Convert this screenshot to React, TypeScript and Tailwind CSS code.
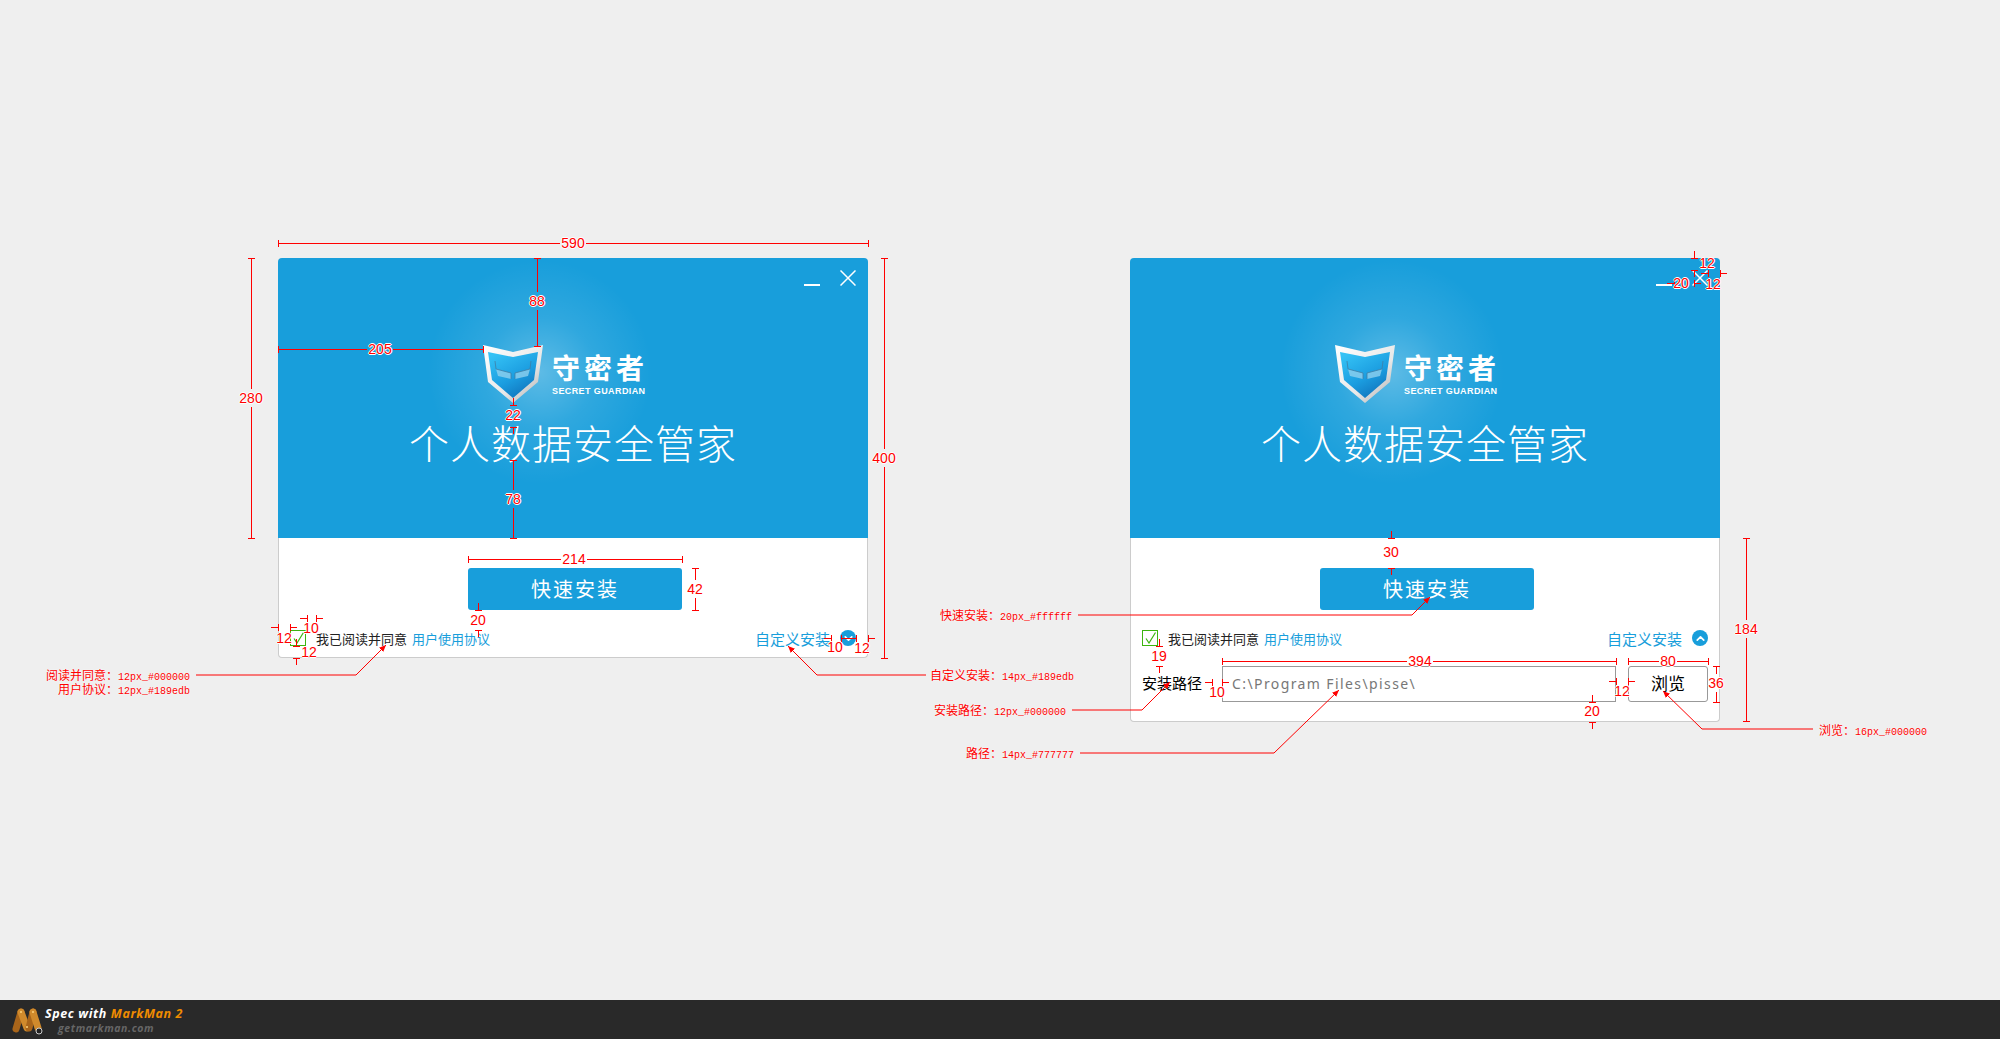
import { ChevronDown, ChevronUp } from "lucide-react";

const cjk = "font-['Liberation_Sans','Noto_Sans_CJK_SC',sans-serif]";

// dimension lines: x1, y1, x2, y2. Short ones get outward stubs instead of a line.
const dims = [
  [278, 243, 868, 243],
  [251, 258, 251, 538],
  [884, 258, 884, 658],
  [537, 258, 537, 346],
  [278, 349, 483, 349],
  [513, 405, 513, 427],
  [513, 460, 513, 538],
  [468, 559, 682, 559],
  [695, 568, 695, 610],
  [478, 610, 478, 630],
  [278, 627, 290, 627],
  [307, 618, 316, 618],
  [296, 646, 296, 658],
  [831, 638, 841, 638],
  [856, 638, 868, 638],
  [1391, 538, 1391, 568],
  [1159, 646, 1159, 666],
  [1222, 661, 1616, 661],
  [1628, 661, 1708, 661],
  [1716, 666, 1716, 702],
  [1746, 538, 1746, 721],
  [1212, 682, 1222, 682],
  [1616, 681, 1628, 681],
  [1592, 702, 1592, 722],
  [1694, 258, 1694, 270],
  [1674, 283, 1694, 283],
  [1708, 273, 1720, 273],
];

const dimLabels: [string, number, number][] = [
  ["590", 573, 243],
  ["280", 251, 398],
  ["400", 884, 458],
  ["88", 537, 301],
  ["205", 380, 349],
  ["22", 513, 415],
  ["78", 513, 499],
  ["214", 574, 559],
  ["42", 695, 589],
  ["20", 478, 620],
  ["12", 284, 638],
  ["10", 311, 628],
  ["12", 309, 652],
  ["10", 835, 647],
  ["12", 862, 648],
  ["30", 1391, 552],
  ["19", 1159, 656],
  ["394", 1420, 661],
  ["80", 1668, 661],
  ["36", 1716, 683],
  ["184", 1746, 629],
  ["10", 1217, 692],
  ["12", 1622, 691],
  ["20", 1592, 711],
  ["12", 1707, 263],
  ["20", 1681, 283],
  ["12", 1713, 284],
];

// leaders from a note to the thing it describes
const leaders = [
  "196,675 356,675 386,645",
  "926,675 817,675 788,646",
  "1078,615 1412,615 1430,597",
  "1072,710 1142,710 1170,682",
  "1080,753 1274,753 1339,690",
  "1813,729 1702,729 1663,691",
];

const notes: [string, string, number, number][] = [
  ["阅读并同意：", "12px_#000000", 190, 677],
  ["用户协议：", "12px_#189edb", 190, 691],
  ["自定义安装：", "14px_#189edb", 1074, 677],
  ["快速安装：", "20px_#ffffff", 1072, 617],
  ["安装路径：", "12px_#000000", 1066, 712],
  ["路径：", "14px_#777777", 1074, 755],
  ["浏览：", "16px_#000000", 1927, 732],
];

function segments(x1: number, y1: number, x2: number, y2: number) {
  const flat = y1 === y2;
  const label = dimLabels.find(([, lx, ly]) =>
    flat ? ly === y1 && lx > x1 && lx < x2 : lx === x1 && ly > y1 && ly < y2
  );
  if (!label) return [[x1, y1, x2, y2]];
  if (flat) {
    const half = label[0].length * 4 + 1;
    return [
      [x1, y1, label[1] - half, y1],
      [label[1] + half, y1, x2, y1],
    ];
  }
  return [
    [x1, y1, x1, label[2] - 9],
    [x1, label[2] + 9, x1, y2],
  ];
}

function Dim({ x1, y1, x2, y2 }: { x1: number; y1: number; x2: number; y2: number }) {
  const flat = y1 === y2;
  const short = flat ? x2 - x1 <= 30 : y2 - y1 <= 30;
  return (
    <g stroke="#ff0000" strokeWidth="1" shapeRendering="crispEdges">
      {flat ? (
        <>
          <line x1={x1} y1={y1 - 3} x2={x1} y2={y1 + 4} />
          <line x1={x2} y1={y1 - 3} x2={x2} y2={y1 + 4} />
        </>
      ) : (
        <>
          <line x1={x1 - 3} y1={y1} x2={x1 + 4} y2={y1} />
          <line x1={x1 - 3} y1={y2} x2={x1 + 4} y2={y2} />
        </>
      )}
      {short ? (
        flat ? (
          <>
            <line x1={x1 - 7} y1={y1} x2={x1} y2={y1} />
            <line x1={x2} y1={y1} x2={x2 + 7} y2={y1} />
          </>
        ) : (
          <>
            <line x1={x1} y1={y1 - 7} x2={x1} y2={y1} />
            <line x1={x1} y1={y2} x2={x1} y2={y2 + 7} />
          </>
        )
      ) : (
        segments(x1, y1, x2, y2).map(([a, b, c, d]) => <line key={`${a}-${b}`} x1={a} y1={b} x2={c} y2={d} />)
      )}
    </g>
  );
}

function Shield() {
  return (
    <svg width="60" height="59" viewBox="0 0 60 59">
      <defs>
        <linearGradient id="rim" x1="0" y1="0" x2="1" y2="1">
          <stop offset="0" stopColor="#ffffff" />
          <stop offset="0.6" stopColor="#e8e8e8" />
          <stop offset="1" stopColor="#a9a9a9" />
        </linearGradient>
        <linearGradient id="core" x1="0.2" y1="0" x2="0.8" y2="1">
          <stop offset="0" stopColor="#35c2f5" />
          <stop offset="0.55" stopColor="#1b9de0" />
          <stop offset="1" stopColor="#0f6fb8" />
        </linearGradient>
      </defs>
      <path d="M0 0 L30 7 L60 0 L55 37 L30 58 L5 37 Z" fill="url(#rim)" />
      <path d="M5 7 L30 12 L55 7 L51 35 L30 53 L9 35 Z" fill="url(#core)" />
      <path d="M13 24 L28 28 L28 34 L15 31 Z" fill="#8fd0ee" opacity="0.8" />
      <path d="M47 24 L32 28 L32 34 L45 31 Z" fill="#8fd0ee" opacity="0.8" />
      <path d="M12 16 L13 24 L28 28 L28 34 M48 16 L47 24 L32 28 L32 34" fill="none" stroke="#3f7fa6" strokeWidth="0.8" />
    </svg>
  );
}

function InstallWindow({ expanded, className }: { expanded?: boolean; className: string }) {
  return (
    <div className={`absolute w-[590px] ${cjk} ${className}`}>
      <div className="flex h-[280px] flex-col rounded-t-[4px] bg-[#189edb] bg-[radial-gradient(circle_at_262px_114px,rgba(255,255,255,0.3),rgba(255,255,255,0.1)_55px,rgba(255,255,255,0)_112px)]">
        <div className="flex h-[28px] items-end justify-end gap-5 pr-3">
          <span className="h-0.5 w-4 bg-white" />
          <svg width="16" height="16" viewBox="0 0 16 16">
            <path d="M0.5 0.5 L15.5 15.5 M15.5 0.5 L0.5 15.5" stroke="#ffffff" strokeWidth="1.5" />
          </svg>
        </div>
        <div className="ml-[205px] mt-[59px] flex items-start gap-[9px]">
          <Shield />
          <div className="flex flex-col items-start text-white">
            <div className="mt-[10px] h-[30px] text-[28px] font-bold leading-[30px] tracking-[4px]">守密者</div>
            <div className="mt-[1px] text-[9px] font-bold leading-[10px] tracking-[0.4px]">SECRET GUARDIAN</div>
          </div>
        </div>
        <div className="mt-[15px] text-center text-[40px] font-light leading-[52px] tracking-[1px] text-white">个人数据安全管家</div>
      </div>
      <div className="rounded-b-[4px] border border-t-0 border-[#cccccc] bg-white pt-[30px]">
        <button className="ml-[189px] block h-[42px] w-[214px] rounded-[3px] bg-[#189edb] pt-[2px] text-[20px] tracking-[2px] text-white">快速安装</button>
        <div className="mt-5 flex h-4 items-center pl-[11px] pr-[11px]">
          <span className="flex h-4 w-4 items-center justify-center border border-[#3cb40f] bg-white">
            <svg width="12" height="12" viewBox="0 0 12 12">
              <path d="M2 6.5 L5 11 L11.5 0.5" fill="none" stroke="#3cb40f" strokeWidth="1.2" />
            </svg>
          </span>
          <span className="ml-[10px] mt-[3px] text-[13px] leading-4 text-[#222222]">我已阅读并同意</span>
          <span className="ml-[5px] mt-[3px] text-[13px] leading-4 text-[#189edb]">用户使用协议</span>
          <span className="ml-auto mt-[3px] text-[15px] leading-4 text-[#189edb]">自定义安装</span>
          <span className="ml-[10px] flex h-4 w-4 items-center justify-center rounded-full bg-[#189edb] text-white">
            {expanded ? <ChevronUp size={13} strokeWidth={3.2} /> : <ChevronDown size={13} strokeWidth={3.2} />}
          </span>
        </div>
        {expanded ? (
          <div className="mt-5 flex h-9 items-center pl-[11px]">
            <span className="w-20 text-[15px] text-black">安装路径</span>
            <div className="flex h-9 w-[394px] items-center border border-[#999999] pl-[9px] font-['Noto_Sans',sans-serif] text-sm tracking-[1.4px] text-[#777777]">C:\Program Files\pisse\</div>
            <button className="ml-3 h-9 w-20 rounded-[3px] border border-[#999999] bg-white pt-[1px] text-[17px] text-black">浏览</button>
          </div>
        ) : null}
        <div className={expanded ? "h-[19px]" : "h-[11px]"} />
      </div>
    </div>
  );
}

function SpecMarks() {
  return (
    <>
      <svg className="pointer-events-none absolute left-0 top-0" width="2000" height="1000">
        <defs>
          <marker id="arrow" markerWidth="8" markerHeight="8" refX="7" refY="3" orient="auto">
            <path d="M0 0 L7 3 L0 6 Z" fill="#ff0000" />
          </marker>
        </defs>
        {dims.map(([x1, y1, x2, y2], i) => (
          <Dim key={i} x1={x1} y1={y1} x2={x2} y2={y2} />
        ))}
        <line x1="841" y1="638" x2="856" y2="638" stroke="#ff0000" shapeRendering="crispEdges" />
        {leaders.map((points) => (
          <polyline key={points} points={points} fill="none" stroke="#ff0000" strokeWidth="1" markerEnd="url(#arrow)" />
        ))}
      </svg>
      {dimLabels.map(([text, x, y], i) => (
        <span
          key={i}
          className="absolute -translate-x-1/2 -translate-y-1/2 font-['Liberation_Sans',sans-serif] text-sm leading-[14px] text-[#ff0000] [text-shadow:1px_0_#ffffff,-1px_0_#ffffff,0_1px_#ffffff,0_-1px_#ffffff]"
          style={{ left: x, top: y }}
        >
          {text}
        </span>
      ))}
      {notes.map(([name, spec, right, y]) => (
        <div
          key={name}
          className={`absolute -translate-x-full -translate-y-1/2 whitespace-nowrap text-xs leading-[14px] text-[#ff0000] [text-shadow:0_0_2px_#ffffff] ${cjk}`}
          style={{ left: right, top: y }}
        >
          {name}
          <span className="font-['Liberation_Mono',monospace] text-[10px]">{spec}</span>
        </div>
      ))}
    </>
  );
}

export default function App() {
  return (
    <div className="flex h-[1039px] w-[2000px] flex-col overflow-hidden bg-[#efefef]">
      <div className="relative flex-1">
        <InstallWindow className="left-[278px] top-[258px]" />
        <InstallWindow expanded className="left-[1130px] top-[258px]" />
        <SpecMarks />
      </div>
      {/* MarkMan footer */}
      <div className="flex h-[39px] items-start bg-[#292929] pl-3 pt-2">
        <svg width="32" height="27" viewBox="0 0 32 27">
          <path d="M4 21 L9 4" stroke="#a9651a" strokeWidth="7" strokeLinecap="round" />
          <path d="M9 4 L15 20" stroke="#d08a2c" strokeWidth="7" strokeLinecap="round" />
          <path d="M17 20 L21 4" stroke="#a9651a" strokeWidth="7" strokeLinecap="round" />
          <path d="M21 4 L26 20" stroke="#d08a2c" strokeWidth="7" strokeLinecap="round" />
          <circle cx="9" cy="4" r="1" fill="#ffd27a" />
          <circle cx="21" cy="4" r="1" fill="#ffd27a" />
          <circle cx="15" cy="19" r="1" fill="#ffd27a" />
          <circle cx="27" cy="23" r="3" fill="#222222" stroke="#cccccc" />
        </svg>
        <div className="-mt-[2px] ml-[1px] font-['Open_Sans',sans-serif] italic">
          <div className="text-[12.5px] font-bold leading-[15px] tracking-[0.6px] text-white">
            Spec with <span className="text-[#f08c00]">MarkMan 2</span>
          </div>
          <div className="ml-[13px] mt-[1px] text-[10.5px] font-bold leading-[12px] tracking-[0.6px] text-[#666666]">getmarkman.com</div>
        </div>
      </div>
    </div>
  );
}
